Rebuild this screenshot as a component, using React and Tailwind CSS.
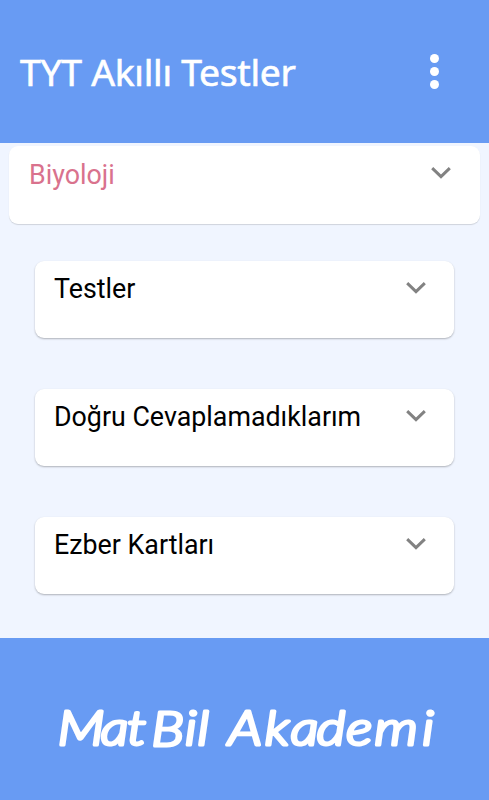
import React from 'react';

const sections = ['Testler', 'Doğru Cevaplamadıklarım', 'Ezber Kartları'];

const Chevron = () => (
    <svg width="20" height="13" viewBox="0 0 20 13" fill="none" className="mt-[21px] shrink-0" aria-hidden="true">
        <path d="M1.2 1.2 L10 9.6 L18.8 1.2" stroke="#828282" strokeWidth="3" />
    </svg>
);

// Handwritten wordmark: rounded strokes and loose letter spacing
const Wordmark = () => (
    <svg
        width="400"
        height="70"
        viewBox="0 0 400 70"
        className="font-['Lato',sans-serif] text-[47px] font-light italic"
        fill="white"
        stroke="white"
        strokeWidth="3.2"
        strokeLinejoin="round"
    >
        <text
            transform="scale(1.18 1)"
            x="6.5 43 65.5 86 114.5 125 136 151 182 204 226 251 275 315.5"
            y="49 49 49 50 49 49 49 49 49 49 49 49 49 49"
        >
            MatBil Akademi
        </text>
    </svg>
);

const App = () => {
    return (
        <div className="flex h-[800px] w-full flex-col overflow-hidden bg-[#f0f5ff] font-['Roboto',sans-serif]">
            <header className="flex h-[143px] shrink-0 items-center justify-between bg-[#689bf3] pr-[50px] pl-5 text-white">
                <h1 className="font-['Noto_Sans',sans-serif] text-[37.3px] leading-none tracking-[-0.28px] whitespace-nowrap [-webkit-text-stroke:0.6px_white]">
                    TYT Akıllı Testler
                </h1>
                <button type="button" aria-label="Menu" className="flex flex-col gap-1">
                    <span className="size-[9px] rounded-full bg-white" />
                    <span className="size-[9px] rounded-full bg-white" />
                    <span className="size-[9px] rounded-full bg-white" />
                </button>
            </header>

            <main className="flex-1 pt-[3px]">
                <section className="mr-[9px] ml-[9px] flex h-[78px] justify-between rounded-[9px] bg-white pr-[29px] pl-[20px] shadow-[0_1px_1px_rgba(0,0,0,0.14)]">
                    <h2 className="pt-[13px] text-[26.8px] leading-8 text-[#d9728d]">Biyoloji</h2>
                    <Chevron />
                </section>

                <div className="mt-[37px] mr-[35px] ml-[35px] flex flex-col gap-[51px]">
                    {sections.map((title) => (
                        <section
                            key={title}
                            className="flex h-[77px] justify-between rounded-[9px] bg-white pr-[28px] pl-[19px] shadow-[0_1px_2px_rgba(0,0,0,0.28)]"
                        >
                            <h2 className="pt-[12px] text-[26.8px] leading-8 whitespace-nowrap text-black">{title}</h2>
                            <Chevron />
                        </section>
                    ))}
                </div>
            </main>

            <footer className="flex h-[162px] shrink-0 items-start bg-[#689bf3] pt-[58px] pl-[50px]">
                <Wordmark />
            </footer>
        </div>
    );
};

export default App;
